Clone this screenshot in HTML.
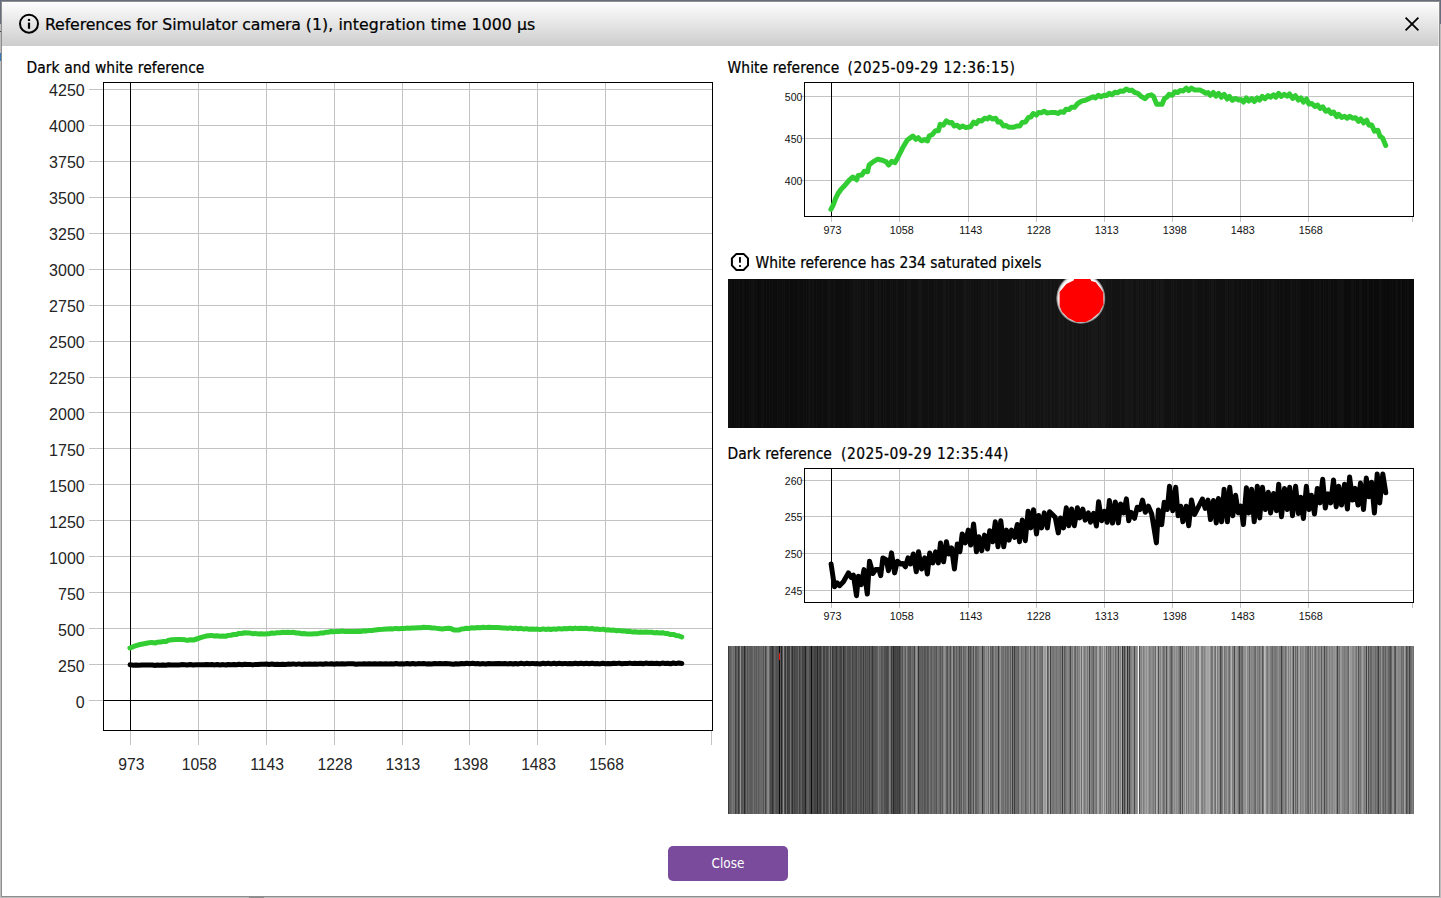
<!DOCTYPE html>
<html lang="en"><head><meta charset="utf-8"><title>References</title>
<style>
html,body{margin:0;padding:0}
body{width:1441px;height:898px;overflow:hidden;position:relative;background:#bdbdbd;font-family:'DejaVu Sans','Liberation Sans',sans-serif;color:#000}
.abs{position:absolute}
#bgtop{left:0;top:0;width:1441px;height:24px;background:#666e7e}
#frame{left:1px;top:1px;width:1439px;height:896px;background:#8e8e8e}
#dlg{left:2px;top:2px;width:1437px;height:894px;background:#fff}
#tbar{left:2px;top:2px;width:1437px;height:44px;box-sizing:border-box;border-top:1px solid #fff;border-right:1px solid rgba(255,255,255,.45);background:linear-gradient(#fcfcfc,#cdcdcd)}
.t{position:absolute;white-space:pre;line-height:1;-webkit-text-stroke:.22px #000}
#title{left:44.8px;top:17.1px;font-size:15.8px;transform:scaleX(.996);transform-origin:0 0}
.lab{font-size:15.4px;letter-spacing:.08px;font-family:'DejaVu Sans Condensed','DejaVu Sans','Liberation Sans',sans-serif}
#btn{left:668px;top:846px;width:120px;height:35px;border-radius:5px;background:#7a4b9c;color:#fff;font-size:13.4px;font-family:'DejaVu Sans Condensed','DejaVu Sans',sans-serif;text-align:center;line-height:36.6px}
</style></head><body>
<div class="abs" id="bgtop"></div>
<div class="abs" style="left:0;top:31px;width:1px;height:1px;background:#444"></div><div class="abs" style="left:0;top:53px;width:1px;height:8px;background:#3b78b8"></div><div class="abs" style="left:249px;top:897px;width:15px;height:1px;background:#8e8e8e"></div>
<div class="abs" id="frame"></div>
<div class="abs" id="dlg"></div>
<div class="abs" id="tbar"></div>
<div class="t" id="title"><span style="letter-spacing:-.115px">References for Simulator camera </span><span style="letter-spacing:.07px">(1), integration time 1000 µs</span></div>
<div class="t lab" style="left:26.5px;top:60.9px">Dark and white reference</div>
<div class="t lab" style="left:727.5px;top:60.9px">White reference</div>
<div class="t lab" style="left:847.5px;top:60.9px;letter-spacing:.48px">(2025-09-29 12:36:15)</div>
<div class="t lab" style="left:755.5px;top:255.6px;letter-spacing:0">White reference has 234 saturated pixels</div>
<div class="t lab" style="left:727.5px;top:446.6px">Dark reference</div>
<div class="t lab" style="left:841px;top:446.6px;letter-spacing:.48px">(2025-09-29 12:35:44)</div>
<svg class="abs" style="left:0;top:0" width="1441" height="898" viewBox="0 0 1441 898">
<path d="M89 664.5 H712 M89 628.5 H712 M89 592.5 H712 M89 556.5 H712 M89 520.5 H712 M89 484.5 H712 M89 448.5 H712 M89 412.5 H712 M89 377.5 H712 M89 341.5 H712 M89 305.5 H712 M89 269.5 H712 M89 233.5 H712 M89 197.5 H712 M89 161.5 H712 M89 125.5 H712 M89 89.5 H712 M198.5 83 V745 M266.5 83 V745 M334.5 83 V745 M402.5 83 V745 M469.5 83 V745 M537.5 83 V745 M605.5 83 V745 M89 700.5 H103 M130.5 731 V745 M711.5 731 V745" stroke="#c3c3c3" stroke-width="1" fill="none" shape-rendering="crispEdges"/>
<path d="M103.5 82.5 H712.5 V730.5 H103.5 Z M130.5 83 V730 M104 700.5 H712" stroke="#000" stroke-width="1" fill="none" shape-rendering="crispEdges"/>
<path d="M129.9 648 L132.2 647.2 L134.6 646.1 L136.9 645.3 L140 644.5 L143.9 643.8 L147.8 643 L151.6 642.4 L155.5 642.9 L157.1 642.2 L160.6 642.1 L163.3 641.4 L166.4 641.5 L167.9 640.4 L171.8 639.8 L176.4 639.4 L181.1 639.6 L185 639.8 L187.3 640.4 L190.4 639.8 L193.5 640 L196.6 639 L201.3 637.4 L205.9 636.1 L211.3 635.4 L214.4 636 L216.8 635.7 L219.9 636.2 L223 636 L226.1 636.2 L227.6 635.4 L230.7 635.2 L233.8 634.5 L236.9 634.5 L238.5 633.4 L241.6 633.5 L244.7 632.8 L247.8 633.1 L250.1 633.1 L252.4 633.7 L255.5 633.5 L257.9 633.9 L261 633.7 L264.1 633.9 L268.7 633.8 L271.8 633 L274.5 633.3 L276.8 632.7 L279.9 632.8 L283 632.3 L285.3 632.5 L287.6 632.2 L290.7 632.5 L293.8 632.3 L296.2 633 L298.5 633 L301.6 633.7 L303.9 633.6 L307 633.9 L311.7 633.9 L314.8 633.7 L317.9 633.7 L320.2 633.1 L323.3 633 L326.4 632.2 L328.7 632.2 L331.1 631.5 L334.2 631.8 L336.5 631.4 L339.6 631.4 L341.9 631.1 L345 631.5 L348.9 631.4 L352.8 631.4 L355.9 631.5 L358.2 631.2 L361.3 631.4 L363.6 630.8 L366.7 630.9 L369.1 630.5 L372.2 630.5 L375.3 629.9 L379.1 629.4 L383 629.3 L386.9 628.9 L390.8 628.7 L393.1 628.9 L395.7 628.4 L398.5 628.7 L401.6 628.4 L404 628.5 L406.6 628.1 L409.4 628.3 L412.5 627.9 L414.8 628 L417.9 627.7 L421 627.7 L423.6 627.3 L426.7 627.6 L429.1 627.5 L432.2 627.9 L435.3 628.1 L438.4 628.6 L442.3 629 L445.4 628.5 L448.5 628.3 L450.8 628.6 L453.9 629.9 L459.3 629.9 L461.6 629 L464 628.7 L466.3 628.3 L469.4 628.4 L472 627.8 L474.8 627.9 L477.1 627.6 L480.3 627.7 L483.4 627.2 L485.7 627.6 L488.5 627.2 L491.9 627.5 L497.3 627.5 L500.4 627.8 L502.7 628.1 L505.1 627.9 L507.4 628.4 L510.2 627.9 L512.8 628.5 L515.5 628.1 L518.2 628.7 L521 628.3 L524.1 629.1 L526.3 628.6 L529.1 629.3 L532.2 628.9 L535.3 629.2 L537.6 629.1 L540.3 629.6 L543.1 628.9 L545.4 629.4 L548.5 629 L551.1 629.5 L553.9 628.9 L556.2 629.2 L558.9 628.6 L561.7 629 L564.8 628.5 L567.1 628.7 L570.2 628.3 L572.5 628.7 L575.2 628.1 L577.8 628.6 L580.9 628.3 L583.7 628.5 L586 628.2 L589.1 628.9 L591.9 628.5 L594.8 629.2 L597.3 628.9 L600 629.6 L603.1 629.1 L605.4 629.9 L608.2 629.8 L611.3 630.3 L613.9 630.1 L616.6 630.7 L619 630.4 L622.1 631.1 L624.8 630.9 L627.4 631.5 L629.9 631.3 L633 632.1 L634.9 631.7 L638 632.2 L640.8 632 L643.4 632.3 L646 632 L648.8 632.3 L651.6 632.3 L654.7 632.9 L656.9 632.5 L659.7 633.1 L662.8 632.7 L665.1 633.5 L667.7 633.5 L670.5 634.6 L673.9 634.4 L676 635.4 L678.6 635.7 L681.7 637" stroke="#32cd32" stroke-width="5" fill="none" stroke-linejoin="round" stroke-linecap="round"/>
<path d="M130.1 664.8 L133.4 665.2 L136.2 665.1 L138.4 665.2 L142.3 665.1 L147.3 664.9 L150.1 665 L152.3 665 L155.4 665.4 L157.3 665 L160 665.2 L162.8 664.9 L166.1 665.3 L168.3 664.7 L171.7 664.9 L174.4 664.9 L177.7 664.9 L179.4 665 L181.6 664.6 L184.9 664.7 L187.2 664.9 L190.1 664.5 L193.2 664.9 L196 664.7 L199.3 664.8 L201.6 664.7 L204 664.8 L206.5 664.6 L209.1 664.8 L211.9 664.6 L214.8 664.9 L217.1 664.5 L220.2 664.9 L223.1 664.6 L225.9 665 L228.1 664.5 L231.2 664.7 L234 664.5 L236.8 664.7 L238.9 664.3 L242 664.7 L244.7 664.3 L247.2 664.6 L249.9 664.4 L252.7 664.9 L255.6 664.4 L258.3 664.5 L260.5 664.2 L263.6 664.3 L266.6 664.1 L268.9 664.4 L271.9 664 L274.6 664.5 L277.1 664.2 L279.9 664.5 L282.6 664.2 L285.6 664.5 L287.8 664.1 L290.9 664.3 L293.4 663.9 L296.1 664.4 L298.9 663.9 L301.8 664.4 L304.4 664.1 L307 664.3 L309.5 664.1 L312.5 664.2 L315.3 664 L317.5 664.3 L320.3 663.9 L323.3 664.3 L326 663.7 L328.6 664.1 L331.4 663.7 L334.3 664.2 L336.6 663.8 L339.4 664.1 L342.1 663.8 L345.2 664.1 L347.4 663.7 L353 663.8 L356.1 664.2 L358.3 663.9 L361.3 664.1 L364 663.7 L366.5 664 L369.3 663.7 L372 664 L375.1 663.7 L377.3 663.9 L380.4 663.7 L382.9 663.9 L386 663.8 L388.1 663.9 L391.2 663.8 L393.9 664 L396.1 663.5 L399.1 663.9 L401.9 663.7 L404.7 663.9 L406.9 663.5 L410 664 L412.8 663.5 L415.7 664 L418.1 663.6 L421.1 663.8 L423.8 663.5 L426 663.9 L428.5 663.7 L431.8 663.9 L434.6 663.6 L437.4 663.7 L439.8 663.5 L442.6 663.7 L445.7 663.6 L449 663.8 L453.6 664.3 L455.6 663.7 L459 664 L461.4 663.5 L464.5 663.7 L466.7 663.2 L469.8 663.7 L472.8 663.3 L475.2 663.8 L477.8 663.6 L480 663.9 L483.3 663.6 L485.8 664 L488.5 663.5 L491.6 663.8 L499.4 663.5 L502.1 663.7 L504.9 663.5 L507.5 663.9 L510.4 663.5 L513.2 664 L515.4 663.5 L518.5 663.9 L521 663.3 L524.3 663.9 L526.5 663.3 L529.6 663.8 L532.4 663.4 L535.1 663.8 L537.6 663.6 L540.1 664 L543.1 663.3 L545.5 663.8 L548.3 663.3 L550.9 663.9 L554 663.2 L556.4 663.9 L559.2 663.3 L561.9 663.7 L564.9 663.4 L567.3 663.8 L570.2 663.4 L573 663.7 L575.2 663.2 L578 663.8 L581 663.3 L583.8 663.7 L586.2 663.3 L589 663.8 L592.1 663.2 L594.8 663.8 L597.3 663.5 L599.8 663.9 L602.8 663.2 L605.4 663.7 L607.9 663.4 L610.9 663.8 L613.7 663.3 L616.2 663.6 L619 663.1 L621.6 663.7 L624.4 663.4 L627 663.6 L629.7 663.1 L632.5 663.6 L634.9 663.2 L637.7 663.6 L640.8 663.2 L643.6 663.7 L645.8 663.1 L648.8 663.5 L651.3 663.3 L654.1 663.6 L656.6 663.2 L659.6 663.7 L662.4 663.1 L664.8 663.4 L667.7 663.2 L670.5 663.8 L673.3 663 L675.7 663.6 L678.8 663 L681.8 663.4" stroke="#000" stroke-width="5" fill="none" stroke-linejoin="round" stroke-linecap="round"/>
<g font-family="'Liberation Sans',sans-serif" font-size="16" fill="#242424" text-anchor="end">
<text x="84.7" y="707.9">0</text>
<text x="84.7" y="671.9">250</text>
<text x="84.7" y="635.9">500</text>
<text x="84.7" y="599.9">750</text>
<text x="84.7" y="563.9">1000</text>
<text x="84.7" y="527.9">1250</text>
<text x="84.7" y="492">1500</text>
<text x="84.7" y="456">1750</text>
<text x="84.7" y="420">2000</text>
<text x="84.7" y="384">2250</text>
<text x="84.7" y="348">2500</text>
<text x="84.7" y="312">2750</text>
<text x="84.7" y="276">3000</text>
<text x="84.7" y="240">3250</text>
<text x="84.7" y="204">3500</text>
<text x="84.7" y="168">3750</text>
<text x="84.7" y="132.1">4000</text>
<text x="84.7" y="96.1">4250</text>
</g>
<g font-family="'Liberation Sans',sans-serif" font-size="15.7" fill="#242424" text-anchor="middle">
<text x="131.4" y="770">973</text>
<text x="199.3" y="770">1058</text>
<text x="267.1" y="770">1143</text>
<text x="335" y="770">1228</text>
<text x="402.9" y="770">1313</text>
<text x="470.8" y="770">1398</text>
<text x="538.6" y="770">1483</text>
<text x="606.5" y="770">1568</text>
</g>
<path d="M800 96.5 H1413 M800 138.5 H1413 M800 180.5 H1413 M899.5 83 V221.5 M968.5 83 V221.5 M1036.5 83 V221.5 M1104.5 83 V221.5 M1172.5 83 V221.5 M1240.5 83 V221.5 M1308.5 83 V221.5 M831.5 217 V221.5 M1412.5 217 V221.5" stroke="#c3c3c3" stroke-width="1" fill="none" shape-rendering="crispEdges"/>
<path d="M804.5 82.5 H1413.5 V216.5 H804.5 Z M831.5 82.5 V216.5" stroke="#000" stroke-width="1" fill="none" shape-rendering="crispEdges"/>
<path d="M830.9 209.4 L833.3 204.8 L835.6 198.5 L837.9 193.8 L841.1 189.2 L845 185.3 L848.8 180.6 L852.7 177 L856.6 179.8 L858.2 175.4 L861.8 175.1 L864.4 171.2 L867.6 171.7 L869.1 165 L873 161.9 L877.7 159.2 L882.4 160.3 L886.3 161.9 L888.6 165 L891.7 161.4 L894.9 162.7 L898 157.2 L902.7 147.8 L907.3 140 L912.8 136.1 L915.9 139.3 L918.2 137.7 L921.4 140.8 L924.5 139.6 L927.6 140.8 L929.2 136.1 L932.3 134.6 L935.4 130.7 L938.5 130.7 L940.1 124.4 L943.2 125.2 L946.3 120.9 L949.4 122.9 L951.8 122.4 L954.1 126 L957.2 125.2 L959.6 127.6 L962.7 126 L965.8 127.6 L970.5 126.8 L973.6 122.1 L976.2 123.7 L978.6 120.5 L981.7 120.9 L984.8 118.2 L987.2 119 L989.5 117.1 L992.6 119 L995.7 118.2 L998.1 122.1 L1000.4 121.8 L1003.5 126 L1005.9 125.5 L1009 127.3 L1013.7 127.3 L1016.8 126 L1019.9 126 L1022.2 122.4 L1025.4 122.1 L1028.5 117.4 L1030.8 117.1 L1033.2 113.5 L1036.3 115.1 L1038.6 112.4 L1041.7 112.7 L1044.1 111.2 L1047.2 113.1 L1051.1 112.4 L1055 112.4 L1058.1 113.5 L1060.4 111.7 L1063.6 112.4 L1065.9 109.3 L1069 109.6 L1071.4 107.3 L1074.5 107.3 L1077.6 103.7 L1081.5 101.1 L1085.4 100.3 L1089.3 98.4 L1093.2 96.8 L1095.5 97.9 L1098.2 95.3 L1101 96.8 L1104.1 95.3 L1106.5 95.6 L1109.1 93.3 L1111.9 94.8 L1115 92.2 L1117.4 92.8 L1120.5 90.9 L1123.6 91.2 L1126.2 89 L1129.4 90.6 L1131.7 90.1 L1134.8 92.5 L1137.9 93.3 L1141.1 96.4 L1145 98.7 L1148.1 95.6 L1151.2 94.8 L1153.5 96.4 L1156.6 104.2 L1162.1 104.2 L1164.4 98.7 L1166.8 97.2 L1169.1 94.3 L1172.2 95.3 L1174.9 91.7 L1177.7 92.5 L1180 90.6 L1183.2 90.9 L1186.3 88.1 L1188.6 90.6 L1191.4 88.1 L1194.9 90.1 L1200.3 90.1 L1203.4 91.7 L1205.8 93.3 L1208.1 92.5 L1210.4 95.3 L1213.3 92.5 L1215.9 96.1 L1218.6 93.3 L1221.4 97.2 L1224.2 94.3 L1227.3 99 L1229.5 96.4 L1232.3 100.3 L1235.4 98.4 L1238.5 100 L1240.9 99.5 L1243.5 102.1 L1246.3 97.9 L1248.7 101.1 L1251.8 98.7 L1254.4 101.5 L1257.2 97.9 L1259.6 100 L1262.2 96.4 L1265 98.7 L1268.1 95.6 L1270.5 97.2 L1273.6 94.8 L1275.9 97.2 L1278.6 93.3 L1281.2 96.4 L1284.3 94.3 L1287.2 96.1 L1289.5 94 L1292.6 98.4 L1295.4 95.6 L1298.4 100 L1300.9 97.9 L1303.5 102.1 L1306.6 99 L1309 104.2 L1311.8 103.4 L1314.9 106.5 L1317.6 105 L1320.2 108.4 L1322.7 106.8 L1325.8 111.2 L1328.5 109.9 L1331.1 113.5 L1333.6 112 L1336.7 116.6 L1338.6 114.3 L1341.7 117.4 L1344.5 116.2 L1347.2 118.2 L1349.8 116.2 L1352.7 118.2 L1355.5 117.7 L1358.6 121.3 L1360.8 119 L1363.6 122.9 L1366.7 120.2 L1369 125.2 L1371.7 124.9 L1374.5 131.2 L1377.9 130.2 L1379.9 136.1 L1382.6 138 L1385.7 145.5" stroke="#32cd32" stroke-width="5" fill="none" stroke-linejoin="round" stroke-linecap="round"/>
<g font-family="'Liberation Sans',sans-serif" font-size="10.5" fill="#111" text-anchor="end">
<text x="802.4" y="100.9">500</text>
<text x="802.4" y="142.9">450</text>
<text x="802.4" y="184.9">400</text>
</g>
<g font-family="'Liberation Sans',sans-serif" font-size="10.75" fill="#111" text-anchor="middle">
<text x="832.5" y="234">973</text>
<text x="901.8" y="234">1058</text>
<text x="970.8" y="234">1143</text>
<text x="1038.8" y="234">1228</text>
<text x="1106.8" y="234">1313</text>
<text x="1174.8" y="234">1398</text>
<text x="1242.8" y="234">1483</text>
<text x="1310.8" y="234">1568</text>
</g>
<path d="M800 480.5 H1413 M800 516.5 H1413 M800 553.5 H1413 M800 590.5 H1413 M899.5 469 V607.5 M968.5 469 V607.5 M1036.5 469 V607.5 M1104.5 469 V607.5 M1172.5 469 V607.5 M1240.5 469 V607.5 M1308.5 469 V607.5 M831.5 603 V607.5 M1412.5 603 V607.5" stroke="#c3c3c3" stroke-width="1" fill="none" shape-rendering="crispEdges"/>
<path d="M804.5 468.5 H1413.5 V602.5 H804.5 Z M831.5 468.5 V602.5" stroke="#000" stroke-width="1" fill="none" shape-rendering="crispEdges"/>
<path d="M831.1 564 L834.5 586.8 L837.2 582.9 L839.5 585.7 L843.4 581.8 L848.4 572.9 L851.2 577.4 L853.4 575.1 L856.5 595.7 L858.4 576.3 L861.2 584.6 L864 569.6 L867.3 594.1 L869.5 561.2 L872.9 573.5 L875.7 569.6 L879 569.6 L880.7 575.7 L882.9 557.9 L886.2 559.6 L888.5 570.7 L891.5 552.9 L894.6 572.9 L897.4 561.2 L900.7 564 L902.9 563.5 L905.4 566.8 L908 557.9 L910.5 564 L913.3 554 L916.3 571.8 L918.5 551.8 L921.6 569 L924.7 557.9 L927.4 574 L929.7 552.9 L932.8 562.9 L935.6 551.8 L938.3 562.9 L940.5 542.9 L943.6 561.8 L946.4 541.7 L948.8 554 L951.6 547.9 L954.4 569 L957.3 544 L959.9 551.8 L962.2 533.9 L965.3 542.9 L968.3 530.1 L970.6 545.1 L973.6 523.9 L976.4 551.8 L978.9 536.7 L981.7 550.7 L984.5 535.1 L987.5 549 L989.7 530.7 L992.8 541.8 L995.3 521.8 L998 546.8 L1000.8 520.7 L1003.7 546.8 L1006.4 530.1 L1009 540.1 L1011.5 530.1 L1014.5 537.4 L1017.3 524.5 L1019.5 541.8 L1022.3 520.1 L1025.3 540.7 L1028.1 511.2 L1030.7 527.9 L1033.5 509.7 L1036.5 534 L1038.7 515.6 L1041.6 527.9 L1044.3 512.9 L1047.4 527.9 L1049.6 511.7 L1055.2 517.3 L1058.3 532.9 L1060.5 517.9 L1063.5 527.9 L1066.3 507.8 L1068.8 525.7 L1071.6 509 L1074.3 525.7 L1077.4 507.8 L1079.7 517.9 L1082.8 509 L1085.2 520.1 L1088.3 512.9 L1090.5 522.3 L1093.6 513.4 L1096.4 526 L1098.6 501.7 L1101.6 520.7 L1104.4 511.2 L1107.2 522.3 L1109.4 500.6 L1112.5 523.1 L1115.3 501.9 L1118.3 522.9 L1120.6 503.9 L1123.6 512.9 L1126.4 498.9 L1128.7 520.7 L1131.1 512.3 L1134.5 518.4 L1137.2 507.3 L1140 509.5 L1142.5 500.1 L1145.3 512.3 L1148.4 506.2 L1151.7 514 L1156.4 542.9 L1158.4 510.1 L1161.7 524.6 L1164.2 502.3 L1167.3 509.5 L1169.5 486.2 L1172.7 510.7 L1175.7 487.3 L1178.1 515.7 L1180.7 506.2 L1182.9 521.8 L1186.2 506.2 L1188.7 525.7 L1191.5 500.1 L1194.6 514.5 L1202.4 499 L1205.2 508.4 L1208 500.1 L1210.5 519.6 L1213.5 500.4 L1216.3 522.9 L1218.5 498.4 L1221.6 521.8 L1224.1 489.3 L1227.4 521.8 L1229.7 487.3 L1232.8 515.7 L1235.6 495.3 L1238.3 512.9 L1240.8 506.2 L1243.4 524.6 L1246.4 487.8 L1248.8 512.9 L1251.6 489.3 L1254.2 521.8 L1257.3 486.2 L1259.7 517.9 L1262.5 487.3 L1265.3 509.5 L1268.3 492.3 L1270.6 512.9 L1273.6 493.4 L1276.4 510.7 L1278.7 484.2 L1281.5 516.8 L1284.5 488.4 L1287.2 509.5 L1289.7 487.3 L1292.5 515.7 L1295.6 486.2 L1298.4 513.4 L1300.8 497.3 L1303.4 518.4 L1306.4 486.2 L1309 509.5 L1311.5 495.3 L1314.5 514 L1317.3 488.4 L1319.9 502.9 L1322.7 479.3 L1325.3 507.9 L1328.1 493.9 L1330.7 502.9 L1333.5 480 L1336.2 506.8 L1338.7 486.2 L1341.5 505.1 L1344.6 484.2 L1347.4 509 L1349.6 477 L1352.6 500.1 L1355.2 488.4 L1358 505.1 L1360.5 483 L1363.5 509.5 L1366.3 478.1 L1368.8 496.7 L1371.6 482.3 L1374.4 512.9 L1377.2 473.9 L1379.7 502.9 L1382.8 473.9 L1385.8 492.8" stroke="#000" stroke-width="5" fill="none" stroke-linejoin="round" stroke-linecap="round"/>
<g font-family="'Liberation Sans',sans-serif" font-size="10.5" fill="#111" text-anchor="end">
<text x="802.4" y="484.9">260</text>
<text x="802.4" y="520.9">255</text>
<text x="802.4" y="557.9">250</text>
<text x="802.4" y="594.9">245</text>
</g>
<g font-family="'Liberation Sans',sans-serif" font-size="10.75" fill="#111" text-anchor="middle">
<text x="832.5" y="620">973</text>
<text x="901.8" y="620">1058</text>
<text x="970.8" y="620">1143</text>
<text x="1038.8" y="620">1228</text>
<text x="1106.8" y="620">1313</text>
<text x="1174.8" y="620">1398</text>
<text x="1242.8" y="620">1483</text>
<text x="1310.8" y="620">1568</text>
</g>
<defs><linearGradient id="bg1" x1="0" x2="1" y1="0" y2="0"><stop offset="0" stop-color="#0b0b0b"/><stop offset=".5" stop-color="#141414"/><stop offset="1" stop-color="#0a0a0a"/></linearGradient><clipPath id="c1"><rect x="728" y="279" width="686" height="149"/></clipPath><radialGradient id="halo"><stop offset="0.86" stop-color="#fff"/><stop offset="0.92" stop-color="#d8d8d8"/><stop offset="0.97" stop-color="#808080" stop-opacity=".8"/><stop offset="1" stop-color="#444" stop-opacity="0"/></radialGradient></defs>
<rect x="728" y="279" width="686" height="149" fill="url(#bg1)"/>
<path d="M728.5 279v149M729.5 279v149M731.5 279v149M734.5 279v149M736.5 279v149M738.5 279v149M739.5 279v149M742.5 279v149M743.5 279v149M749.5 279v149M751.5 279v149M752.5 279v149M753.5 279v149M754.5 279v149M756.5 279v149M761.5 279v149M762.5 279v149M763.5 279v149M766.5 279v149M769.5 279v149M772.5 279v149M777.5 279v149M779.5 279v149M782.5 279v149M784.5 279v149M789.5 279v149M798.5 279v149M803.5 279v149M806.5 279v149M808.5 279v149M809.5 279v149M810.5 279v149M812.5 279v149M813.5 279v149M816.5 279v149M822.5 279v149M827.5 279v149M828.5 279v149M829.5 279v149M830.5 279v149M833.5 279v149M834.5 279v149M843.5 279v149M850.5 279v149M852.5 279v149M853.5 279v149M854.5 279v149M855.5 279v149M856.5 279v149M857.5 279v149M858.5 279v149M859.5 279v149M860.5 279v149M862.5 279v149M865.5 279v149M866.5 279v149M867.5 279v149M869.5 279v149M874.5 279v149M875.5 279v149M876.5 279v149M877.5 279v149M879.5 279v149M880.5 279v149M883.5 279v149M885.5 279v149M890.5 279v149M892.5 279v149M896.5 279v149M897.5 279v149M904.5 279v149M907.5 279v149M908.5 279v149M909.5 279v149M910.5 279v149M918.5 279v149M919.5 279v149M920.5 279v149M921.5 279v149M928.5 279v149M934.5 279v149M936.5 279v149M943.5 279v149M944.5 279v149M945.5 279v149M948.5 279v149M954.5 279v149M955.5 279v149M963.5 279v149M964.5 279v149M965.5 279v149M966.5 279v149M968.5 279v149M970.5 279v149M981.5 279v149M983.5 279v149M984.5 279v149M986.5 279v149M990.5 279v149M994.5 279v149M996.5 279v149M997.5 279v149M1015.5 279v149M1019.5 279v149M1020.5 279v149M1022.5 279v149M1023.5 279v149M1024.5 279v149M1028.5 279v149M1031.5 279v149M1034.5 279v149M1040.5 279v149M1043.5 279v149M1044.5 279v149M1045.5 279v149M1047.5 279v149M1050.5 279v149M1051.5 279v149M1054.5 279v149M1058.5 279v149M1059.5 279v149M1060.5 279v149M1062.5 279v149M1063.5 279v149M1067.5 279v149M1068.5 279v149M1072.5 279v149M1073.5 279v149M1076.5 279v149M1080.5 279v149M1082.5 279v149M1085.5 279v149M1088.5 279v149M1089.5 279v149M1091.5 279v149M1092.5 279v149M1093.5 279v149M1094.5 279v149M1095.5 279v149M1096.5 279v149M1097.5 279v149M1099.5 279v149M1101.5 279v149M1102.5 279v149M1103.5 279v149M1104.5 279v149M1105.5 279v149M1108.5 279v149M1111.5 279v149M1120.5 279v149M1125.5 279v149M1126.5 279v149M1127.5 279v149M1128.5 279v149M1130.5 279v149M1131.5 279v149M1132.5 279v149M1136.5 279v149M1137.5 279v149M1138.5 279v149M1140.5 279v149M1142.5 279v149M1146.5 279v149M1148.5 279v149M1150.5 279v149M1154.5 279v149M1156.5 279v149M1157.5 279v149M1158.5 279v149M1160.5 279v149M1161.5 279v149M1162.5 279v149M1163.5 279v149M1171.5 279v149M1173.5 279v149M1176.5 279v149M1182.5 279v149M1192.5 279v149M1193.5 279v149M1194.5 279v149M1196.5 279v149M1203.5 279v149M1209.5 279v149M1211.5 279v149M1212.5 279v149M1213.5 279v149M1215.5 279v149M1225.5 279v149M1226.5 279v149M1227.5 279v149M1229.5 279v149M1231.5 279v149M1232.5 279v149M1233.5 279v149M1237.5 279v149M1241.5 279v149M1243.5 279v149M1246.5 279v149M1251.5 279v149M1252.5 279v149M1254.5 279v149M1256.5 279v149M1259.5 279v149M1264.5 279v149M1267.5 279v149M1268.5 279v149M1271.5 279v149M1272.5 279v149M1273.5 279v149M1274.5 279v149M1276.5 279v149M1279.5 279v149M1283.5 279v149M1290.5 279v149M1291.5 279v149M1292.5 279v149M1294.5 279v149M1296.5 279v149M1297.5 279v149M1299.5 279v149M1309.5 279v149M1314.5 279v149M1315.5 279v149M1317.5 279v149M1319.5 279v149M1320.5 279v149M1323.5 279v149M1325.5 279v149M1328.5 279v149M1329.5 279v149M1330.5 279v149M1333.5 279v149M1337.5 279v149M1338.5 279v149M1339.5 279v149M1340.5 279v149M1341.5 279v149M1342.5 279v149M1343.5 279v149M1351.5 279v149M1352.5 279v149M1353.5 279v149M1355.5 279v149M1359.5 279v149M1360.5 279v149M1361.5 279v149M1367.5 279v149M1368.5 279v149M1373.5 279v149M1379.5 279v149M1380.5 279v149M1381.5 279v149M1390.5 279v149M1392.5 279v149M1395.5 279v149M1396.5 279v149M1397.5 279v149M1400.5 279v149M1401.5 279v149M1405.5 279v149M1407.5 279v149M1408.5 279v149" stroke="#fff" stroke-opacity=".025" stroke-width="1" shape-rendering="crispEdges"/>
<g clip-path="url(#c1)"><ellipse cx="1080.8" cy="298.4" rx="25" ry="25.8" fill="url(#halo)"/><polygon points="1074.3,279 1090.4,279 1091.3,281 1095.7,282.3 1100.6,288.5 1103.3,292.5 1103.5,304.5 1099.3,312.6 1091.3,319.2 1085.9,321.9 1076.1,321.9 1068.1,317.9 1061.9,311.7 1059.6,306.3 1059.6,292.1 1066.3,284 1073.5,280.5" fill="#fe0000"/></g>
<g shape-rendering="crispEdges" stroke-width="1">
<rect x="728" y="646" width="686" height="168" fill="#6a6a6a"/>
<path stroke="#0c0c0c" d="M779.5 646v168M811.5 646v168"/>
<path stroke="#242424" d="M781.5 646v168M805.5 646v168M817.5 646v168"/>
<path stroke="#2a2a2a" d="M744.5 646v168M893.5 646v168"/>
<path stroke="#303030" d="M772.5 646v168M792.5 646v168M843.5 646v168M918.5 646v168M1122.5 646v168M1127.5 646v168"/>
<path stroke="#363636" d="M785.5 646v168M820.5 646v168M832.5 646v168M836.5 646v168M872.5 646v168M899.5 646v168"/>
<path stroke="#3c3c3c" d="M728.5 646v168M738.5 646v168M787.5 646v168M863.5 646v168M891.5 646v168M982.5 646v168M998.5 646v168M1012.5 646v168M1014.5 646v168M1062.5 646v168M1378.5 646v168"/>
<path stroke="#424242" d="M735.5 646v168M765.5 646v168M788.5 646v168M789.5 646v168M794.5 646v168M799.5 646v168M802.5 646v168M804.5 646v168M814.5 646v168M815.5 646v168M819.5 646v168M823.5 646v168M824.5 646v168M830.5 646v168M840.5 646v168M841.5 646v168M852.5 646v168M856.5 646v168M869.5 646v168M894.5 646v168M895.5 646v168M897.5 646v168M914.5 646v168M968.5 646v168M1050.5 646v168M1124.5 646v168M1129.5 646v168M1281.5 646v168M1337.5 646v168M1366.5 646v168M1409.5 646v168"/>
<path stroke="#484848" d="M770.5 646v168M773.5 646v168M803.5 646v168M810.5 646v168M816.5 646v168M826.5 646v168M827.5 646v168M833.5 646v168M835.5 646v168M844.5 646v168M860.5 646v168M865.5 646v168M886.5 646v168M887.5 646v168M896.5 646v168M898.5 646v168M1070.5 646v168M1089.5 646v168M1118.5 646v168M1134.5 646v168M1220.5 646v168M1234.5 646v168M1239.5 646v168M1293.5 646v168M1324.5 646v168M1406.5 646v168"/>
<path stroke="#4e4e4e" d="M745.5 646v168M771.5 646v168M776.5 646v168M778.5 646v168M784.5 646v168M791.5 646v168M795.5 646v168M796.5 646v168M797.5 646v168M809.5 646v168M812.5 646v168M813.5 646v168M818.5 646v168M837.5 646v168M839.5 646v168M845.5 646v168M847.5 646v168M848.5 646v168M849.5 646v168M850.5 646v168M855.5 646v168M861.5 646v168M867.5 646v168M884.5 646v168M950.5 646v168M953.5 646v168M959.5 646v168M970.5 646v168M973.5 646v168M1139.5 646v168M1158.5 646v168M1166.5 646v168M1180.5 646v168M1182.5 646v168M1368.5 646v168M1390.5 646v168M1395.5 646v168"/>
<path stroke="#545454" d="M739.5 646v168M741.5 646v168M742.5 646v168M747.5 646v168M763.5 646v168M777.5 646v168M782.5 646v168M793.5 646v168M800.5 646v168M806.5 646v168M821.5 646v168M834.5 646v168M853.5 646v168M854.5 646v168M858.5 646v168M871.5 646v168M873.5 646v168M875.5 646v168M881.5 646v168M885.5 646v168M888.5 646v168M892.5 646v168M900.5 646v168M902.5 646v168M910.5 646v168M924.5 646v168M927.5 646v168M936.5 646v168M940.5 646v168M947.5 646v168M992.5 646v168M1034.5 646v168M1262.5 646v168M1358.5 646v168"/>
<path stroke="#5a5a5a" d="M736.5 646v168M750.5 646v168M751.5 646v168M754.5 646v168M756.5 646v168M758.5 646v168M775.5 646v168M780.5 646v168M828.5 646v168M838.5 646v168M866.5 646v168M868.5 646v168M874.5 646v168M876.5 646v168M882.5 646v168M905.5 646v168M908.5 646v168M909.5 646v168M922.5 646v168M925.5 646v168M928.5 646v168M931.5 646v168M942.5 646v168M956.5 646v168M961.5 646v168M1047.5 646v168M1064.5 646v168M1093.5 646v168M1171.5 646v168M1321.5 646v168"/>
<path stroke="#606060" d="M729.5 646v168M730.5 646v168M743.5 646v168M749.5 646v168M752.5 646v168M801.5 646v168M807.5 646v168M808.5 646v168M825.5 646v168M859.5 646v168M862.5 646v168M864.5 646v168M870.5 646v168M877.5 646v168M919.5 646v168M920.5 646v168M921.5 646v168M934.5 646v168M946.5 646v168M954.5 646v168M963.5 646v168M975.5 646v168M976.5 646v168M990.5 646v168M1010.5 646v168M1018.5 646v168M1025.5 646v168M1030.5 646v168M1075.5 646v168M1110.5 646v168M1242.5 646v168M1297.5 646v168M1308.5 646v168M1383.5 646v168M1385.5 646v168M1389.5 646v168M1394.5 646v168"/>
<path stroke="#666666" d="M737.5 646v168M748.5 646v168M755.5 646v168M759.5 646v168M761.5 646v168M766.5 646v168M769.5 646v168M774.5 646v168M798.5 646v168M842.5 646v168M846.5 646v168M851.5 646v168M857.5 646v168M879.5 646v168M883.5 646v168M901.5 646v168M912.5 646v168M923.5 646v168M926.5 646v168M930.5 646v168M935.5 646v168M969.5 646v168M1005.5 646v168M1007.5 646v168M1042.5 646v168M1106.5 646v168M1115.5 646v168M1155.5 646v168M1249.5 646v168M1255.5 646v168M1272.5 646v168M1295.5 646v168M1315.5 646v168M1348.5 646v168M1370.5 646v168M1371.5 646v168M1375.5 646v168M1377.5 646v168M1388.5 646v168M1391.5 646v168M1407.5 646v168M1410.5 646v168"/>
<path stroke="#6c6c6c" d="M731.5 646v168M733.5 646v168M746.5 646v168M757.5 646v168M760.5 646v168M762.5 646v168M786.5 646v168M822.5 646v168M880.5 646v168M907.5 646v168M913.5 646v168M933.5 646v168M939.5 646v168M960.5 646v168M965.5 646v168M971.5 646v168M988.5 646v168M993.5 646v168M1003.5 646v168M1008.5 646v168M1015.5 646v168M1016.5 646v168M1017.5 646v168M1021.5 646v168M1037.5 646v168M1060.5 646v168M1081.5 646v168M1108.5 646v168M1163.5 646v168M1196.5 646v168M1215.5 646v168M1221.5 646v168M1229.5 646v168M1241.5 646v168M1259.5 646v168M1285.5 646v168M1307.5 646v168M1310.5 646v168M1326.5 646v168M1380.5 646v168M1401.5 646v168M1403.5 646v168"/>
<path stroke="#727272" d="M734.5 646v168M753.5 646v168M790.5 646v168M890.5 646v168M904.5 646v168M911.5 646v168M932.5 646v168M938.5 646v168M941.5 646v168M949.5 646v168M958.5 646v168M964.5 646v168M977.5 646v168M978.5 646v168M983.5 646v168M984.5 646v168M991.5 646v168M995.5 646v168M1001.5 646v168M1002.5 646v168M1026.5 646v168M1040.5 646v168M1041.5 646v168M1048.5 646v168M1053.5 646v168M1056.5 646v168M1065.5 646v168M1069.5 646v168M1074.5 646v168M1077.5 646v168M1096.5 646v168M1100.5 646v168M1170.5 646v168M1179.5 646v168M1198.5 646v168M1211.5 646v168M1224.5 646v168M1238.5 646v168M1254.5 646v168M1275.5 646v168M1282.5 646v168M1339.5 646v168M1356.5 646v168M1360.5 646v168M1382.5 646v168M1411.5 646v168M1413.5 646v168"/>
<path stroke="#787878" d="M732.5 646v168M764.5 646v168M829.5 646v168M831.5 646v168M929.5 646v168M937.5 646v168M948.5 646v168M957.5 646v168M996.5 646v168M999.5 646v168M1006.5 646v168M1013.5 646v168M1035.5 646v168M1039.5 646v168M1052.5 646v168M1084.5 646v168M1087.5 646v168M1091.5 646v168M1092.5 646v168M1123.5 646v168M1125.5 646v168M1128.5 646v168M1130.5 646v168M1153.5 646v168M1164.5 646v168M1172.5 646v168M1186.5 646v168M1188.5 646v168M1212.5 646v168M1240.5 646v168M1263.5 646v168M1267.5 646v168M1271.5 646v168M1274.5 646v168M1300.5 646v168M1305.5 646v168M1312.5 646v168M1318.5 646v168M1344.5 646v168M1347.5 646v168M1373.5 646v168M1376.5 646v168M1384.5 646v168M1402.5 646v168"/>
<path stroke="#7e7e7e" d="M878.5 646v168M889.5 646v168M903.5 646v168M917.5 646v168M955.5 646v168M972.5 646v168M997.5 646v168M1004.5 646v168M1022.5 646v168M1023.5 646v168M1027.5 646v168M1028.5 646v168M1033.5 646v168M1051.5 646v168M1054.5 646v168M1055.5 646v168M1057.5 646v168M1058.5 646v168M1059.5 646v168M1066.5 646v168M1072.5 646v168M1095.5 646v168M1099.5 646v168M1109.5 646v168M1113.5 646v168M1143.5 646v168M1149.5 646v168M1202.5 646v168M1217.5 646v168M1222.5 646v168M1228.5 646v168M1232.5 646v168M1257.5 646v168M1270.5 646v168M1276.5 646v168M1279.5 646v168M1280.5 646v168M1288.5 646v168M1306.5 646v168M1314.5 646v168M1329.5 646v168M1336.5 646v168M1359.5 646v168M1364.5 646v168M1369.5 646v168M1372.5 646v168M1374.5 646v168M1379.5 646v168M1386.5 646v168M1387.5 646v168M1408.5 646v168M1412.5 646v168"/>
<path stroke="#848484" d="M767.5 646v168M915.5 646v168M943.5 646v168M945.5 646v168M951.5 646v168M966.5 646v168M979.5 646v168M981.5 646v168M986.5 646v168M1009.5 646v168M1024.5 646v168M1061.5 646v168M1068.5 646v168M1071.5 646v168M1079.5 646v168M1104.5 646v168M1116.5 646v168M1120.5 646v168M1131.5 646v168M1141.5 646v168M1160.5 646v168M1178.5 646v168M1197.5 646v168M1201.5 646v168M1204.5 646v168M1214.5 646v168M1225.5 646v168M1226.5 646v168M1233.5 646v168M1251.5 646v168M1253.5 646v168M1258.5 646v168M1266.5 646v168M1273.5 646v168M1277.5 646v168M1283.5 646v168M1286.5 646v168M1290.5 646v168M1292.5 646v168M1302.5 646v168M1319.5 646v168M1325.5 646v168M1327.5 646v168M1332.5 646v168M1338.5 646v168M1342.5 646v168M1343.5 646v168M1345.5 646v168M1346.5 646v168M1353.5 646v168M1355.5 646v168M1365.5 646v168M1398.5 646v168"/>
<path stroke="#8a8a8a" d="M768.5 646v168M906.5 646v168M962.5 646v168M967.5 646v168M980.5 646v168M994.5 646v168M1011.5 646v168M1019.5 646v168M1031.5 646v168M1032.5 646v168M1063.5 646v168M1067.5 646v168M1078.5 646v168M1085.5 646v168M1090.5 646v168M1094.5 646v168M1102.5 646v168M1111.5 646v168M1117.5 646v168M1133.5 646v168M1135.5 646v168M1136.5 646v168M1140.5 646v168M1150.5 646v168M1152.5 646v168M1162.5 646v168M1169.5 646v168M1174.5 646v168M1176.5 646v168M1184.5 646v168M1191.5 646v168M1193.5 646v168M1195.5 646v168M1219.5 646v168M1247.5 646v168M1252.5 646v168M1260.5 646v168M1284.5 646v168M1296.5 646v168M1303.5 646v168M1316.5 646v168M1323.5 646v168M1331.5 646v168M1352.5 646v168M1363.5 646v168M1399.5 646v168M1400.5 646v168M1405.5 646v168"/>
<path stroke="#909090" d="M783.5 646v168M944.5 646v168M974.5 646v168M1020.5 646v168M1036.5 646v168M1038.5 646v168M1076.5 646v168M1083.5 646v168M1112.5 646v168M1132.5 646v168M1144.5 646v168M1146.5 646v168M1151.5 646v168M1154.5 646v168M1167.5 646v168M1190.5 646v168M1210.5 646v168M1237.5 646v168M1243.5 646v168M1244.5 646v168M1245.5 646v168M1248.5 646v168M1250.5 646v168M1268.5 646v168M1278.5 646v168M1301.5 646v168M1309.5 646v168M1320.5 646v168M1322.5 646v168M1334.5 646v168M1361.5 646v168M1392.5 646v168M1393.5 646v168M1396.5 646v168M1397.5 646v168"/>
<path stroke="#969696" d="M740.5 646v168M916.5 646v168M952.5 646v168M985.5 646v168M987.5 646v168M1000.5 646v168M1086.5 646v168M1088.5 646v168M1101.5 646v168M1107.5 646v168M1114.5 646v168M1119.5 646v168M1126.5 646v168M1148.5 646v168M1159.5 646v168M1165.5 646v168M1173.5 646v168M1177.5 646v168M1181.5 646v168M1189.5 646v168M1192.5 646v168M1203.5 646v168M1205.5 646v168M1218.5 646v168M1230.5 646v168M1235.5 646v168M1236.5 646v168M1256.5 646v168M1261.5 646v168M1269.5 646v168M1317.5 646v168M1328.5 646v168M1330.5 646v168M1333.5 646v168M1341.5 646v168M1350.5 646v168M1354.5 646v168M1357.5 646v168M1381.5 646v168"/>
<path stroke="#9c9c9c" d="M1029.5 646v168M1044.5 646v168M1045.5 646v168M1073.5 646v168M1137.5 646v168M1175.5 646v168M1183.5 646v168M1227.5 646v168M1294.5 646v168M1298.5 646v168M1304.5 646v168M1311.5 646v168M1335.5 646v168M1340.5 646v168M1351.5 646v168M1367.5 646v168"/>
<path stroke="#a2a2a2" d="M989.5 646v168M1097.5 646v168M1142.5 646v168M1145.5 646v168M1157.5 646v168M1161.5 646v168M1168.5 646v168M1187.5 646v168M1207.5 646v168M1208.5 646v168M1289.5 646v168M1362.5 646v168M1404.5 646v168"/>
<path stroke="#a8a8a8" d="M1043.5 646v168M1049.5 646v168M1080.5 646v168M1098.5 646v168M1105.5 646v168M1147.5 646v168M1194.5 646v168M1206.5 646v168M1213.5 646v168M1287.5 646v168M1291.5 646v168M1299.5 646v168M1313.5 646v168M1349.5 646v168"/>
<path stroke="#aeaeae" d="M1121.5 646v168M1185.5 646v168M1209.5 646v168M1223.5 646v168M1246.5 646v168M1265.5 646v168"/>
<path stroke="#b4b4b4" d="M1046.5 646v168M1082.5 646v168M1103.5 646v168M1156.5 646v168M1199.5 646v168M1200.5 646v168M1216.5 646v168M1231.5 646v168"/>
<path stroke="#bababa" d="M1264.5 646v168"/>
<path stroke="#f6f6f6" d="M1138.5 646v168"/>
<rect x="779" y="653" width="1" height="7" fill="#e01010"/>
</g>
<circle cx="29" cy="23.7" r="9" fill="none" stroke="#000" stroke-width="2"/>
<rect x="27.9" y="22.6" width="2.2" height="6.2" fill="#000"/><rect x="27.9" y="18.9" width="2.2" height="2.1" fill="#000"/>
<path d="M1405.6 17.6 L1418.4 30.4 M1418.4 17.6 L1405.6 30.4" stroke="#000" stroke-width="1.8" fill="none"/>
<polygon points="736.4,253.9 743.6,253.9 748,258.4 748,265.4 743.6,269.9 736.4,269.9 731.9,265.4 731.9,258.4" fill="none" stroke="#000" stroke-width="2" stroke-linejoin="miter"/>
<rect x="739" y="257.1" width="1.9" height="5.6" fill="#000"/><rect x="739" y="265.1" width="1.9" height="1.8" fill="#000"/>
</svg>
<div class="abs" id="btn">Close</div>
</body></html>
